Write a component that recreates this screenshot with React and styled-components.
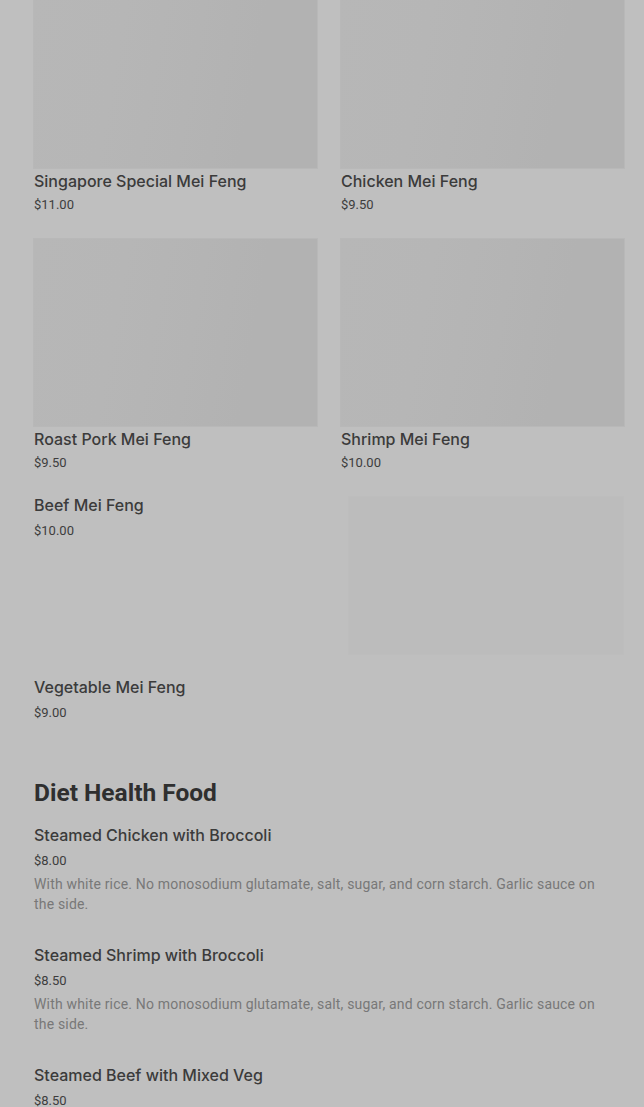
import React from "react";
import styled, { createGlobalStyle } from "styled-components";

const Global = createGlobalStyle`
  html, body { margin: 0; padding: 0; background: #bfbfbf; }
  body { font-family: Roboto, "Liberation Sans", Arial, sans-serif; overflow: hidden; }
  * { box-sizing: border-box; }
`;

const Page = styled.div`
  width: 644px;
  height: 1107px;
  overflow: hidden;
  background: #bfbfbf;
  padding: 0 20px 0 34px;
`;

const Grid = styled.div`
  display: grid;
  grid-template-columns: 1fr 1fr;
  column-gap: 24px;
  row-gap: 24px;
  margin-top: -19px;
`;

const Card = styled.div`
  display: flex;
  flex-direction: column;
`;

const Thumb = styled.div`
  height: 187px;
  background: linear-gradient(100deg, #b7b7b7 0%, #b6b6b6 30%, #b4b4b4 55%, #b2b2b2 75%, #b2b2b2 100%);
  box-shadow: 0 0 0 1px rgba(180, 180, 180, 0.6);
`;

const Title = styled.div`
  font-family: Inter, Roboto, "Liberation Sans", Arial, sans-serif;
  font-size: 16px;
  font-weight: 500;
  line-height: 24px;
  color: #3b3b3b;
  margin-top: ${(p) => (p.$mt != null ? p.$mt : 0)}px;
  white-space: nowrap;
`;

const Price = styled.div`
  font-size: 13px;
  line-height: ${(p) => p.$lh || 20}px;
  color: #3d3d3d;
  margin-top: ${(p) => p.$mt || 0}px;
`;

const Desc = styled.div`
  font-size: 14px;
  line-height: 20px;
  letter-spacing: 0.18px;
  color: #787878;
  margin-top: 2px;
  padding-right: 24px;
`;

const Row = styled.div`
  display: flex;
  align-items: flex-start;
  padding-top: ${(p) => p.$pt || 20}px;
`;

const RowText = styled.div`
  flex: 1;
  display: flex;
  flex-direction: column;
`;

const RowImage = styled.div`
  width: 276px;
  height: 159px;
  margin-top: 3px;
  background: #bcbcbc;
  box-shadow: inset 0 0 0 1px #bdbdbd;
`;

const SectionTitle = styled.h2`
  margin: 53px 0 0;
  font-size: 24.5px;
  line-height: 32px;
  font-weight: 700;
  color: #2f2f2f;
`;

const ListItem = styled.div`
  display: flex;
  flex-direction: column;
  padding: 14px 0 15px;
`;

const gridItems = [
  { name: "Singapore Special Mei Feng", price: "$11.00" },
  { name: "Chicken Mei Feng", price: "$9.50" },
  { name: "Roast Pork Mei Feng", price: "$9.50" },
  { name: "Shrimp Mei Feng", price: "$10.00" },
];

const desc =
  "With white rice. No monosodium glutamate, salt, sugar, and corn starch. Garlic sauce on the side.";

const dietItems = [
  { name: "Steamed Chicken with Broccoli", price: "$8.00", desc },
  { name: "Steamed Shrimp with Broccoli", price: "$8.50", desc },
  { name: "Steamed Beef with Mixed Veg", price: "$8.50", desc },
];

export default function App() {
  return (
    <>
      <Global />
      <Page>
        <Grid>
          {gridItems.map((it) => (
            <Card key={it.name}>
              <Thumb />
              <Title $mt={1}>{it.name}</Title>
              <Price $mt={2}>{it.price}</Price>
            </Card>
          ))}
        </Grid>
        <Row $pt={20}>
          <RowText>
            <Title>Beef Mei Feng</Title>
            <Price $lh={22} $mt={3}>$10.00</Price>
          </RowText>
          <RowImage />
        </Row>
        <Row $pt={20}>
          <RowText>
            <Title>Vegetable Mei Feng</Title>
            <Price $lh={22} $mt={3}>$9.00</Price>
          </RowText>
        </Row>
        <SectionTitle>Diet Health Food</SectionTitle>
        {dietItems.map((it) => (
          <ListItem key={it.name}>
            <Title>{it.name}</Title>
            <Price $lh={22} $mt={3}>{it.price}</Price>
            <Desc>{it.desc}</Desc>
          </ListItem>
        ))}
      </Page>
    </>
  );
}
